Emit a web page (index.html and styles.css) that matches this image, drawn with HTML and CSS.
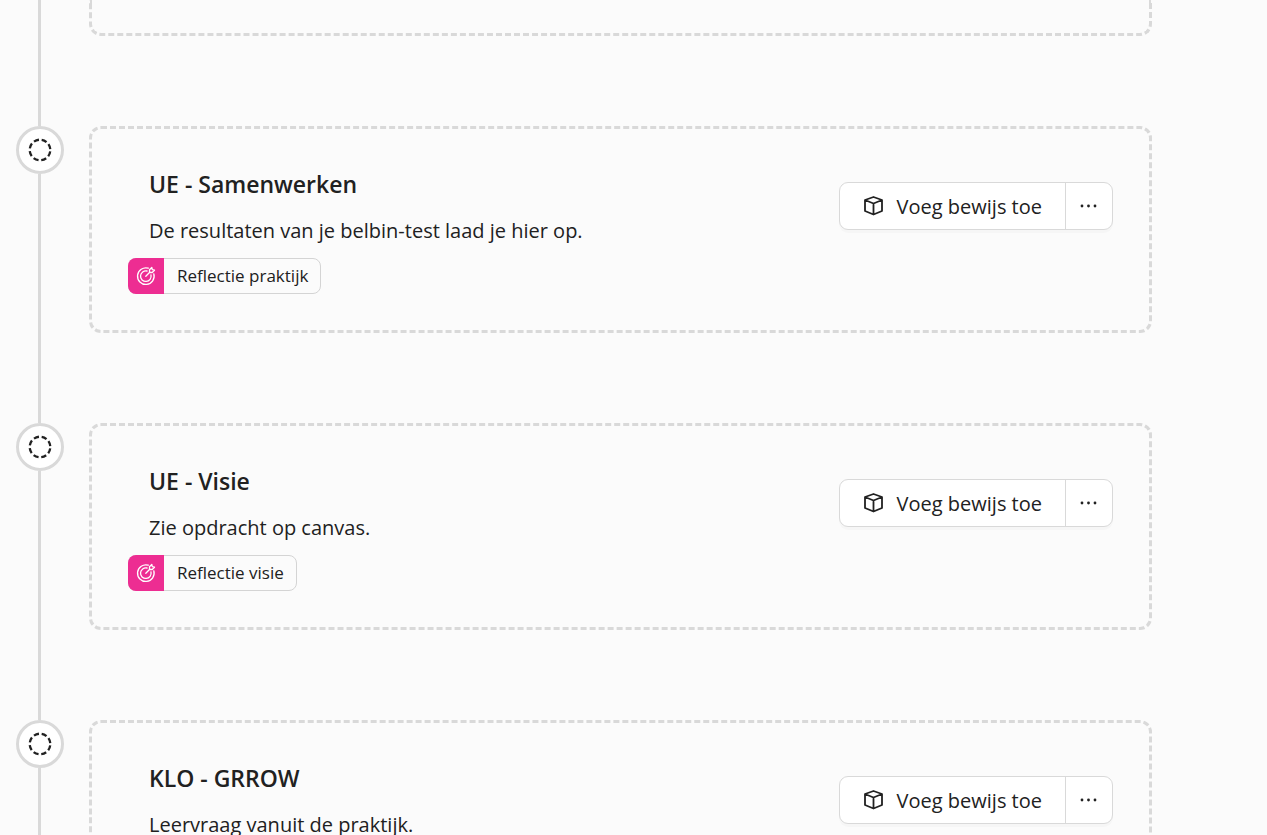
FILE: index.html
```html
<!DOCTYPE html>
<html lang="nl">
<head>
<meta charset="utf-8">
<meta name="viewport" content="width=device-width, initial-scale=1">
<title>Portfolio</title>
<link rel="stylesheet" href="styles.css">
</head>
<body>
<svg class="sprite" aria-hidden="true">
  <symbol id="status" viewBox="0 0 24 24">
    <circle cx="12" cy="12" r="10.3" fill="none" stroke="currentColor" stroke-width="2.3" stroke-dasharray="5.3 2.79" stroke-dashoffset="-1.4"/>
  </symbol>
  <symbol id="box" viewBox="0 0 22 22">
    <path d="M10.500 2 L19 5 V16 L10.500 19.500 L2 16 V5 Z M2 5 L10.500 8.500 L19 5 M10.500 8.500 V19.500" fill="none" stroke="currentColor" stroke-width="1.800" stroke-linejoin="round"/>
  </symbol>
  <symbol id="target" viewBox="0 0 20 20">
    <g fill="none" stroke="currentColor" stroke-width="1.300" stroke-linecap="round" stroke-linejoin="round">
      <path d="M12.300 2.200 A8.300 8.300 0 1 0 17.800 7.800"/>
      <path d="M11 5 A5.300 5.300 0 1 0 15 9"/>
      <path d="M9.800 10.200 L14 6 M13.500 6.500 V3.800 L15.800 1.500 L16.300 3.700 L18.500 4.200 L16.200 6.500 Z"/>
    </g>
  </symbol>
  <symbol id="dots" viewBox="0 0 18 4">
    <g fill="currentColor"><circle cx="2" cy="2" r="1.400"/><circle cx="8.500" cy="2" r="1.400"/><circle cx="15" cy="2" r="1.400"/></g>
  </symbol>
</svg>
<main class="page">
  <ol class="timeline">
    <li class="step step-cut">
      <div class="rail"><span class="line"></span></div>
      <div class="card"></div>
    </li>
    <li class="step">
      <div class="rail"><span class="node"><svg class="status"><use href="#status"/></svg></span><span class="line"></span></div>
      <article class="card">
        <div class="content">
          <h2 class="title">UE - Samenwerken</h2>
          <p class="text">De resultaten van je belbin-test laad je hier op.</p>
          <div class="tag"><span class="tag-icon"><svg class="target"><use href="#target"/></svg></span><span class="tag-label">Reflectie praktijk</span></div>
        </div>
        <div class="actions">
          <button class="add" type="button"><svg class="box"><use href="#box"/></svg>Voeg bewijs toe</button>
          <button class="more" type="button" aria-label="Meer opties"><svg class="dots"><use href="#dots"/></svg></button>
        </div>
      </article>
    </li>
    <li class="step">
      <div class="rail"><span class="node"><svg class="status"><use href="#status"/></svg></span><span class="line"></span></div>
      <article class="card">
        <div class="content">
          <h2 class="title">UE - Visie</h2>
          <p class="text">Zie opdracht op canvas.</p>
          <div class="tag"><span class="tag-icon"><svg class="target"><use href="#target"/></svg></span><span class="tag-label">Reflectie visie</span></div>
        </div>
        <div class="actions">
          <button class="add" type="button"><svg class="box"><use href="#box"/></svg>Voeg bewijs toe</button>
          <button class="more" type="button" aria-label="Meer opties"><svg class="dots"><use href="#dots"/></svg></button>
        </div>
      </article>
    </li>
    <li class="step">
      <div class="rail"><span class="node"><svg class="status"><use href="#status"/></svg></span><span class="line"></span></div>
      <article class="card">
        <div class="content">
          <h2 class="title">KLO - GRROW</h2>
          <p class="text">Leervraag vanuit de praktijk.</p>
        </div>
        <div class="actions">
          <button class="add" type="button"><svg class="box"><use href="#box"/></svg>Voeg bewijs toe</button>
          <button class="more" type="button" aria-label="Meer opties"><svg class="dots"><use href="#dots"/></svg></button>
        </div>
      </article>
    </li>
  </ol>
</main>
</body>
</html>
```
FILE: styles.css
```css
* { box-sizing: border-box; }

body {
  margin: 0;
  background: #fbfbfb;
  color: #212121;
  font-family: "Segoe UI", "Open Sans", "Noto Sans", sans-serif;
  font-size: 20px;
}

.sprite { display: none; }

.page {
  height: 100vh;
  overflow: hidden;
}

.timeline {
  list-style: none;
  margin: 0;
  padding: 0 115px 0 16px;
}

.step {
  display: grid;
  grid-template-columns: 48px minmax(0, 1fr);
  column-gap: 25px;
}

.rail {
  display: flex;
  flex-direction: column;
  align-items: center;
}

.line {
  flex: 1;
  width: 3px;
  margin-right: 1px;
  background: #d9d9d9;
}

.node {
  display: flex;
  align-items: center;
  justify-content: center;
  width: 48px;
  height: 48px;
  border: 3px solid #d9d9d9;
  border-radius: 50%;
  background: #fff;
}

.status {
  width: 24px;
  height: 24px;
}

.card {
  display: flex;
  justify-content: space-between;
  align-items: flex-start;
  gap: 24px;
  margin-bottom: 90px;
  padding: 36px;
  border: 3px dashed #d9d9d9;
  border-radius: 12px;
}

.step-cut .card {
  height: 36px;
  padding: 0;
  border-top: 0;
  border-radius: 0 0 12px 12px;
}

.title,
.text {
  margin: 0;
  padding-left: 21px;
}

.title {
  font-size: 23px;
  font-weight: 600;
  line-height: 38px;
}

.text {
  margin-top: 12px;
  line-height: 32px;
}

.tag {
  display: inline-flex;
  height: 36px;
  margin-top: 11px;
  border: 1px solid #d4d4d4;
  border-radius: 8px;
  font-size: 17px;
  line-height: 34px;
  vertical-align: top;
}

.tag-icon {
  display: flex;
  align-items: center;
  justify-content: center;
  width: 36px;
  margin: -1px 0 -1px -1px;
  border-radius: 8px 0 0 8px;
  background: #ed2d92;
  color: #fff;
}

.target {
  width: 20px;
  height: 20px;
}

.tag-label { padding: 0 12px 0 13px; }

.actions {
  display: flex;
  height: 48px;
  margin-top: 17px;
  border: 1px solid #d9d9d9;
  border-radius: 9px;
  background: #fff;
  box-shadow: 0 3px 0 rgba(0, 0, 0, 0.02);
}

.add,
.more {
  display: flex;
  align-items: center;
  border: 0;
  background: none;
  color: inherit;
  font: inherit;
}

.add {
  gap: 12px;
  padding: 0 23px;
  white-space: nowrap;
}

.more {
  justify-content: center;
  width: 47px;
  padding: 0;
  border-left: 1px solid #d9d9d9;
}

.box {
  width: 22px;
  height: 22px;
}

.dots {
  width: 18px;
  height: 4px;
}
```
